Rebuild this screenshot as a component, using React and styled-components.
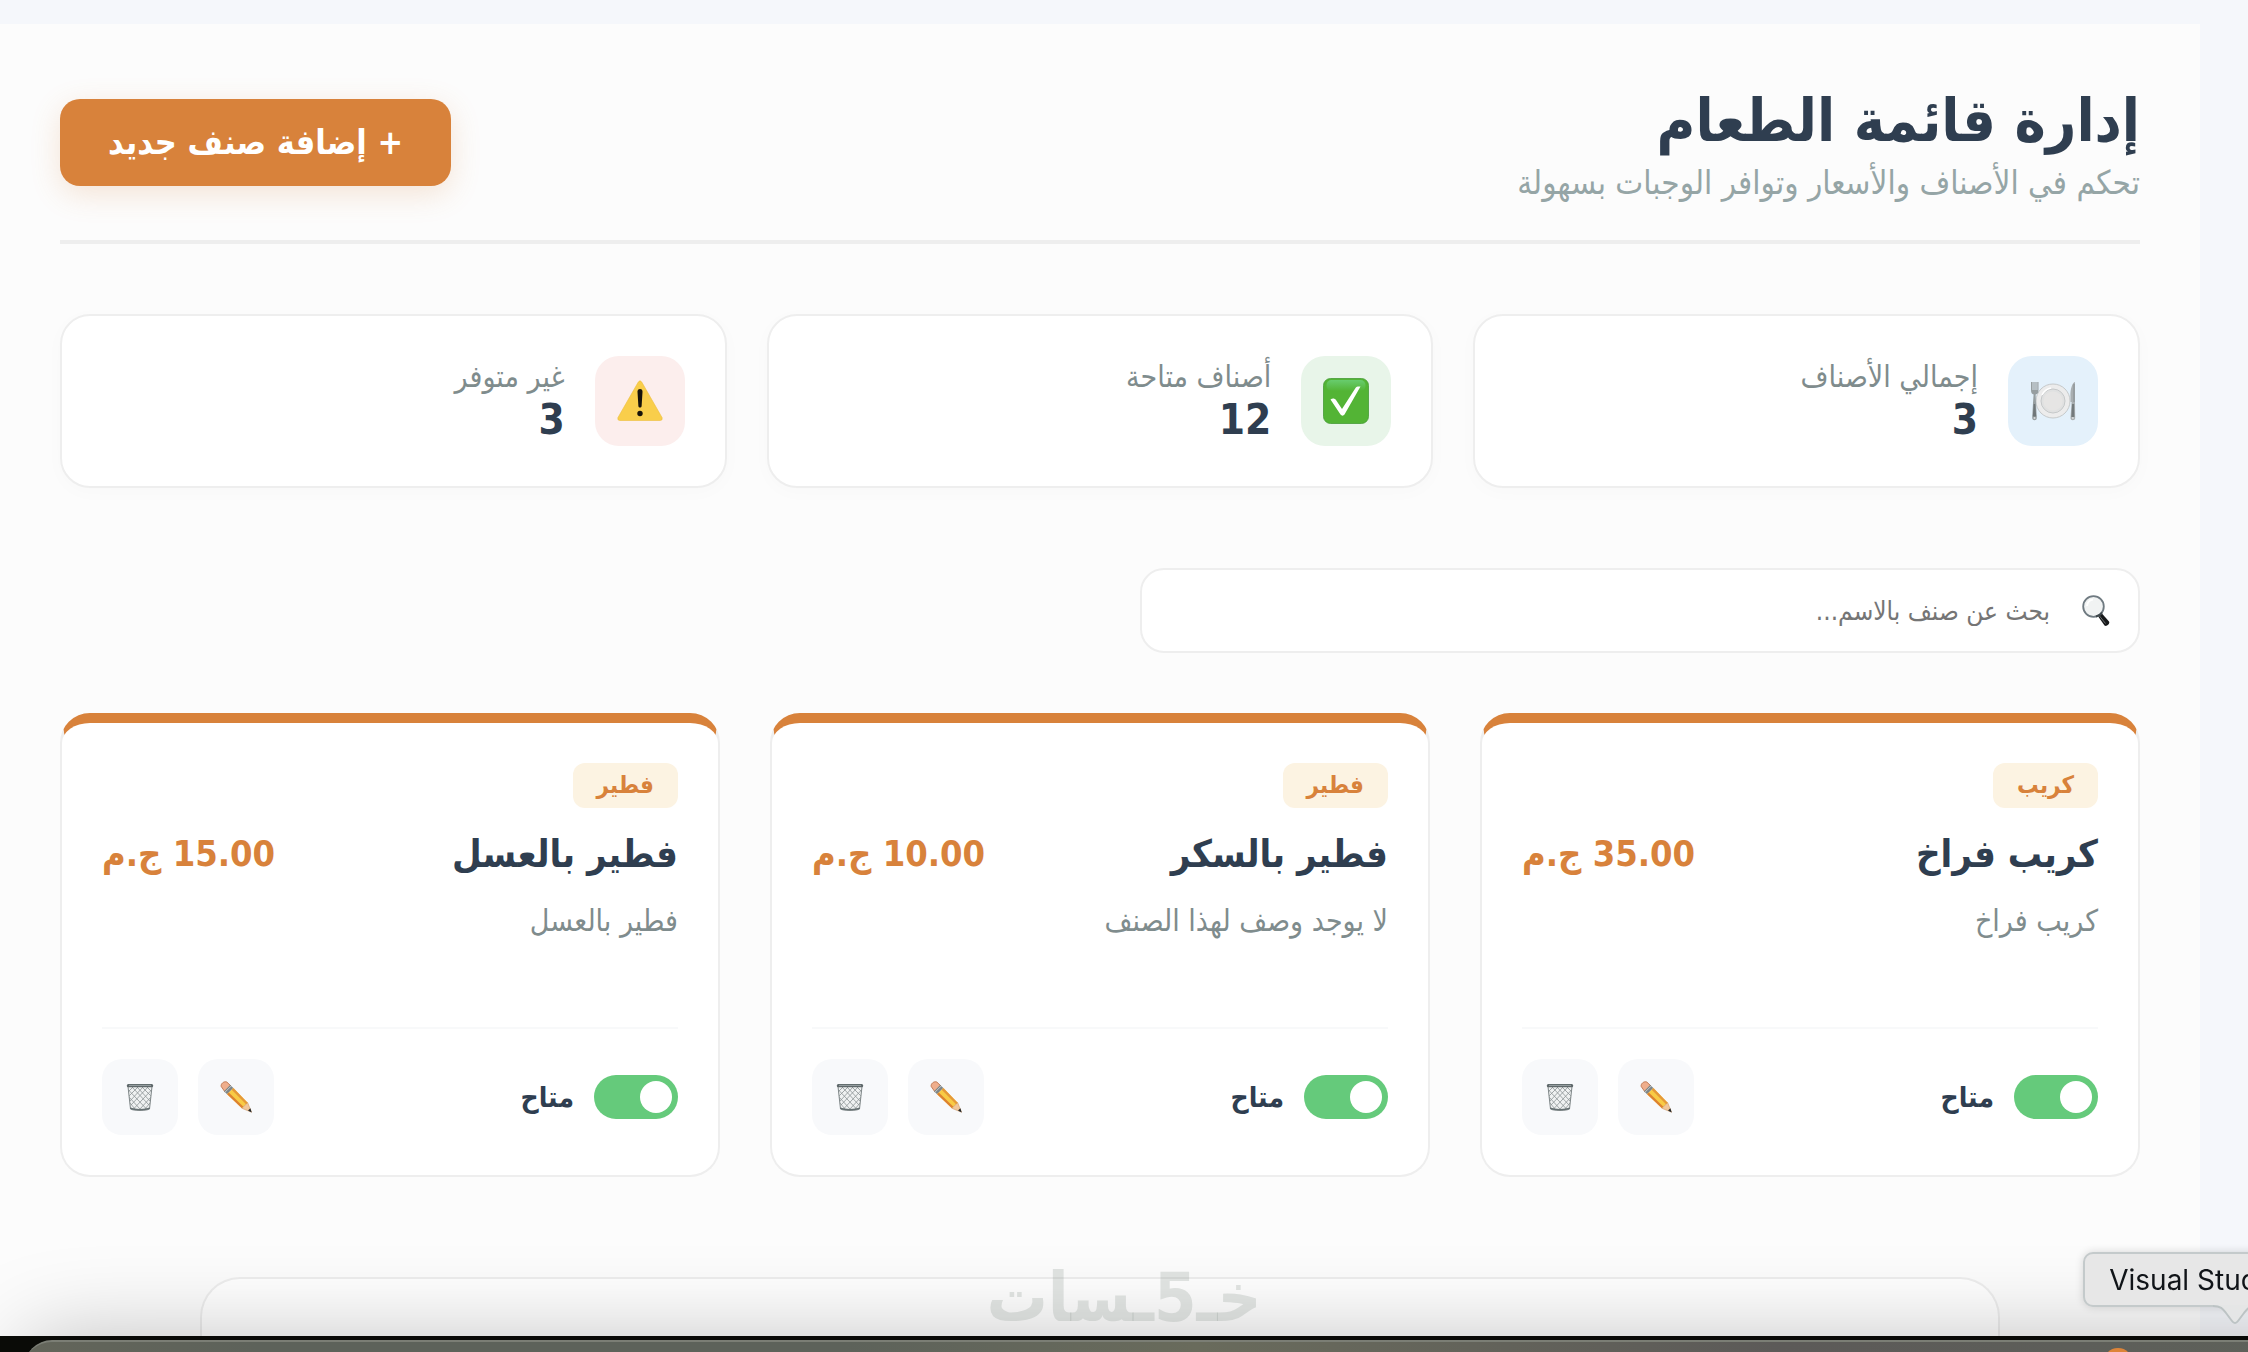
import React, { useState } from 'react';
import styled, { createGlobalStyle } from 'styled-components';

const stats = [
  { id: 'total', label: 'إجمالي الأصناف', value: 3, tint: '#e4f1fb', Icon: PlateIcon },
  { id: 'available', label: 'أصناف متاحة', value: 12, tint: '#e8f5e9', Icon: CheckIcon },
  { id: 'missing', label: 'غير متوفر', value: 3, tint: '#fceeed', Icon: WarningIcon },
];

const initialMeals = [
  { id: 1, category: 'كريب', name: 'كريب فراخ', price: '35.00', description: 'كريب فراخ', available: true },
  { id: 2, category: 'فطير', name: 'فطير بالسكر', price: '10.00', description: '', available: true },
  { id: 3, category: 'فطير', name: 'فطير بالعسل', price: '15.00', description: 'فطير بالعسل', available: true },
];

function PlateIcon() {
  return (
    <svg width="46" height="46" viewBox="0 0 46 46" aria-hidden="true">
      <circle cx="23" cy="23" r="17" fill="#ececec" stroke="#bdbfbf" strokeWidth="0.8" />
      <circle cx="23" cy="23" r="12" fill="#e0e1e1" stroke="#c6c9ca" strokeWidth="1" />
      <circle cx="23" cy="23" r="9.6" fill="#e6e5e4" />
      <path d="M12 17a13 13 0 0 1 9-7" fill="none" stroke="#fff" strokeWidth="1.500" />
      <path d="M1 4v8c0 3 1 4 2.600 4.600L3 25l-.8 15c0 3 4.600 3 4.600 0L6 25l-.4-8.400C7.500 16 8.500 15 8.500 12V4H7.300v8H6.600V4H5.400v8h-.8V4H3.400v8h-.8V4z" fill="#979ea0" />
      <path d="M2.800 38.500L3.700 26h1.500l1 12.500z" fill="#6f7678" />
      <path d="M45 4c-3 1-4.500 7-4.600 13l.2 7h1L40.500 40c0 3 4.700 3 4.700 0L45 24z" fill="#a9afb1" />
      <path d="M44 6v18" stroke="#868d90" strokeWidth="1" />
      <path d="M41.300 39l.8-13h2l.3 13z" fill="#737a7c" />
      <circle cx="4.500" cy="40" r="1" fill="#d6d9da" />
      <circle cx="42.900" cy="40" r="1" fill="#d6d9da" />
    </svg>
  );
}

function CheckIcon() {
  return (
    <svg width="46" height="46" viewBox="0 0 46 46" aria-hidden="true">
      <defs>
        <linearGradient id="checkShine" x1="0" y1="0" x2="0" y2="1">
          <stop offset="0" stopColor="#68cc6e" />
          <stop offset="1" stopColor="#53b435" />
        </linearGradient>
      </defs>
      <rect x="0.500" y="0.500" width="45" height="45" rx="7" fill="#53b435" stroke="#459c36" strokeWidth="0.8" />
      <rect x="3.500" y="2" width="39" height="11" rx="5" fill="url(#checkShine)" />
      <path d="M7.500 21.500c2-1.500 4-1.500 5.500.5l6 9L32.500 10c1-1.500 2.500-1.800 5-1.500L21.500 36.500c-1 1.500-3 1.500-4 0z" fill="#fff" />
    </svg>
  );
}

function WarningIcon() {
  return (
    <svg width="46" height="46" viewBox="0 0 46 46" aria-hidden="true">
      <path d="M21.300 4Q23 1.500 24.700 4L45 39.500Q46 42.500 43 42.500H3Q0 42.500 1 39.500Z" fill="#f9ce4b" stroke="#edbd3b" strokeWidth="0.6" />
      <path d="M20.500 13.500c0-3.300 5-3.300 5 0L24.600 28c-.2 2-3 2-3.200 0z" fill="#16120a" />
      <circle cx="23" cy="35.500" r="2.700" fill="#16120a" />
    </svg>
  );
}

function SearchIcon() {
  return (
    <svg width="28" height="32" viewBox="0 0 28 32" aria-hidden="true">
      <path d="M15.500 20.500l4-2.500 7.500 8.500c1.300 2.500-2.500 5.500-4.500 4z" fill="#17191a" />
      <path d="M17.500 21l6 7.500" stroke="#6b6f70" strokeWidth="1" />
      <circle cx="11.500" cy="11.500" r="10.300" fill="#f1f3f3" stroke="#6f7a81" strokeWidth="1.800" />
      <path d="M20 17.500a10.300 10.300 0 0 1-6 4" fill="none" stroke="#3e474c" strokeWidth="2" />
      <path d="M5 11a7 7 0 0 1 6-6.500" fill="none" stroke="#fff" strokeWidth="2" />
    </svg>
  );
}

function PencilIcon() {
  return (
    <svg width="32" height="32" viewBox="0 0 32 32" aria-hidden="true">
      <path d="M1.200 5.500C.5 3 3.800-.2 6.800 1L11 5l-6 6z" fill="#efae8c" stroke="#b5683f" strokeWidth="0.8" />
      <path d="M4 10.200L10.200 4l3.200 3.100-6.300 6.200z" fill="#7e8688" />
      <path d="M5 11.200L11.200 5" stroke="#c6cbcc" strokeWidth="1" />
      <path d="M7.100 13.300l6.300-6.200 14.300 14.600-5.800 5.600z" fill="#f8cb45" />
      <path d="M7.100 13.300l1.700-1.700 14.600 14.200-1.500 1.500z" fill="#dd8130" />
      <path d="M11.700 8.800l1.700-1.700 14.300 14.600-1.600 1.500z" fill="#e5983a" />
      <path d="M21.900 27.300l5.800-5.600 3.800 9.500z" fill="#f1c79b" stroke="#c78a51" strokeWidth="0.500" />
      <path d="M28 29.400l2.400-2.100 1.300 4.300z" fill="#25292b" />
    </svg>
  );
}

function TrashIcon() {
  return (
    <svg width="28" height="28" viewBox="0 0 28 28" aria-hidden="true">
      <path d="M2 3.500h24L23.500 26c-2 1.800-17 1.800-19 0z" fill="#eff1f1" stroke="#7d8586" strokeWidth="1" />
      <path
        d="M2.500 7l18 19M6 4l17 18M11 4l13 14M16 4l9 9M21 4l4 4M3 14l11 12M4 20l5 6M25.500 7l-18 19M22 4L5 22M17 4L4 18M12 4l-9 9M7 4L3 8M25 14L14 26M24 20l-5 6"
        fill="none"
        stroke="#8b9394"
        strokeWidth="0.8"
      />
      <rect x="0.800" y="1" width="26.400" height="3.200" rx="1.500" fill="#5f686a" />
      <path d="M3 2.400h22" stroke="#a9b0b1" strokeWidth="0.8" />
      <path d="M4.300 25.200c4 2 15.400 2 19.400 0" fill="none" stroke="#667072" strokeWidth="1.500" />
    </svg>
  );
}

const MealCard = ({ meal, onToggle }) => (
  <Card>
    <Category>{meal.category}</Category>
    <CardHeading>
      <MealName>{meal.name}</MealName>
      <Price>{meal.price} ج.م</Price>
    </CardHeading>
    <Description>{meal.description || 'لا يوجد وصف لهذا الصنف'}</Description>
    <CardFooter>
      <Availability>
        <Switch type="checkbox" checked={meal.available} onChange={() => onToggle(meal.id)} />
        {meal.available ? 'متاح' : 'غير متاح'}
      </Availability>
      <Actions>
        <IconButton type="button" aria-label="تعديل"><PencilIcon /></IconButton>
        <IconButton type="button" aria-label="حذف"><TrashIcon /></IconButton>
      </Actions>
    </CardFooter>
  </Card>
);

const App = () => {
  const [meals, setMeals] = useState(initialMeals);
  const [search, setSearch] = useState('');

  const toggleMeal = (id) => {
    setMeals(meals.map((meal) => (meal.id === id ? { ...meal, available: !meal.available } : meal)));
  };

  const visibleMeals = meals.filter((meal) => meal.name.includes(search));

  return (
    <>
      <GlobalStyle />
      <Screen dir="rtl">
        <Page>
          <Header>
            <div>
              <Title>إدارة قائمة الطعام</Title>
              <Subtitle>تحكم في الأصناف والأسعار وتوافر الوجبات بسهولة</Subtitle>
            </div>
            <AddButton type="button">+ إضافة صنف جديد</AddButton>
          </Header>

          <StatsGrid>
            {stats.map(({ id, label, value, tint, Icon }) => (
              <StatCard key={id}>
                <StatIcon $tint={tint}><Icon /></StatIcon>
                <div>
                  <StatLabel>{label}</StatLabel>
                  <StatValue>{value}</StatValue>
                </div>
              </StatCard>
            ))}
          </StatsGrid>

          <SearchBox>
            <SearchIcon />
            <SearchInput
              type="text"
              aria-label="بحث عن صنف"
              placeholder="بحث عن صنف بالاسم..."
              value={search}
              onChange={(event) => setSearch(event.target.value)}
            />
          </SearchBox>

          <MealsGrid>
            {visibleMeals.map((meal) => (
              <MealCard key={meal.id} meal={meal} onToggle={toggleMeal} />
            ))}
          </MealsGrid>

          <BottomPanel />
        </Page>
      </Screen>

      <Desktop>
        <Dock />
        <DockApp />
      </Desktop>
      <Watermark dir="rtl">خـ5ـسات</Watermark>
      <Tooltip>
        Visual Studio Code
        <TooltipArrow width="44" height="20" viewBox="0 0 44 20" aria-hidden="true">
          <path d="M0 0H44V1C36 1 34 4 31 8L25 16Q22 20 19 16L13 8C10 4 8 1 0 1Z" fill="#e5e6e6" />
          <path d="M0 1C8 1 10 4 13 8L19 16Q22 20 25 16L31 8C34 4 36 1 44 1" fill="none" stroke="#bcc3c4" strokeWidth="2" />
        </TooltipArrow>
      </Tooltip>
    </>
  );
};

export default App;

const GlobalStyle = createGlobalStyle`
  * {
    box-sizing: border-box;
  }

  body {
    margin: 0;
    background-color: #f5f7fb;
    font-family: 'DejaVu Sans Condensed', 'DejaVu Sans', sans-serif;
    font-stretch: condensed;
    color: #2f3e50;
  }

  h1, h2, p {
    margin: 0;
  }

  button, input {
    font-family: inherit;
    font-stretch: inherit;
  }
`;

const Screen = styled.div`
  height: 100vh;
  overflow: hidden;
  padding: 24px 48px 0 0;
`;

const Page = styled.main`
  display: flex;
  flex-direction: column;
  min-height: 100%;
  padding: 56px 60px 0;
  background-color: #fcfcfc;
`;

const Header = styled.header`
  display: flex;
  justify-content: space-between;
  align-items: center;
  padding-bottom: 36px;
  margin-bottom: 70px;
  border-bottom: 4px solid #eeeeee;
`;

const Title = styled.h1`
  font-size: 59px;
  font-weight: bold;
  line-height: 82px;
`;

const Subtitle = styled.p`
  font-size: 33px;
  line-height: 42px;
  color: #95a5a6;
`;

const AddButton = styled.button`
  height: 87px;
  padding: 0 48px;
  border: none;
  border-radius: 20px;
  background-color: #d8823b;
  color: white;
  font-size: 34px;
  font-weight: bold;
  cursor: pointer;
  box-shadow: 0 8px 30px rgba(216, 130, 59, 0.2);
`;

const StatsGrid = styled.section`
  display: grid;
  grid-template-columns: repeat(3, 1fr);
  gap: 40px;
  margin-bottom: 80px;
`;

const StatCard = styled.div`
  display: flex;
  align-items: center;
  gap: 30px;
  padding: 40px;
  border: 2px solid #eeeeee;
  border-radius: 30px;
  background-color: white;
  box-shadow: 0 4px 20px rgba(0, 0, 0, 0.02);
`;

const StatIcon = styled.div`
  display: flex;
  align-items: center;
  justify-content: center;
  width: 90px;
  height: 90px;
  border-radius: 24px;
  background-color: ${p => p.$tint};
`;

const StatLabel = styled.p`
  font-size: 30px;
  line-height: 38px;
  color: #7f8c8d;
`;

const StatValue = styled.p`
  font-size: 42px;
  font-weight: bold;
  line-height: 48px;
`;

const SearchBox = styled.label`
  display: flex;
  align-items: center;
  gap: 32px;
  width: 100%;
  max-width: 1000px;
  height: 85px;
  margin-bottom: 60px;
  padding: 0 28px;
  border: 2px solid #eeeeee;
  border-radius: 24px;
  background-color: white;
`;

const SearchInput = styled.input`
  flex: 1;
  min-width: 0;
  padding: 0;
  border: none;
  outline: none;
  background: none;
  font-size: 26px;
  color: #2f3e50;

  &::placeholder {
    color: #757575;
  }
`;

const MealsGrid = styled.section`
  display: grid;
  grid-template-columns: repeat(3, 1fr);
  gap: 50px;
  margin-bottom: 100px;
`;

const Card = styled.article`
  display: flex;
  flex-direction: column;
  align-items: stretch;
  padding: 40px;
  border: 2px solid #eeeeee;
  border-top: 10px solid #d8823b;
  border-radius: 30px;
  background-color: white;
`;

const Category = styled.span`
  align-self: flex-start;
  padding: 0 24px;
  border-radius: 12px;
  background-color: #fcf3e2;
  color: #d8823b;
  font-size: 24px;
  font-weight: bold;
  line-height: 45px;
`;

const CardHeading = styled.div`
  display: flex;
  justify-content: space-between;
  align-items: center;
  margin-top: 22px;
`;

const MealName = styled.h2`
  font-size: 38px;
  font-weight: bold;
  line-height: 48px;
`;

const Price = styled.span`
  font-size: 36px;
  font-weight: bold;
  line-height: 48px;
  color: #d8823b;
`;

const Description = styled.p`
  min-height: 127px;
  margin-top: 22px;
  font-size: 30px;
  line-height: 42px;
  color: #7f8c8d;
`;

const CardFooter = styled.div`
  display: flex;
  justify-content: space-between;
  align-items: center;
  padding-top: 30px;
  border-top: 2px solid #f8f9fa;
`;

const Availability = styled.label`
  display: flex;
  align-items: center;
  gap: 20px;
  font-size: 28px;
  font-weight: bold;
  cursor: pointer;
`;

const Switch = styled.input`
  appearance: none;
  display: flex;
  align-items: center;
  justify-content: flex-end;
  width: 84px;
  height: 44px;
  margin: 0;
  padding: 6px;
  border-radius: 22px;
  background-color: #cccccc;
  cursor: pointer;

  &::before {
    content: '';
    width: 32px;
    height: 32px;
    border-radius: 50%;
    background-color: white;
  }

  &:checked {
    justify-content: flex-start;
    background-color: #65ca7b;
  }
`;

const Actions = styled.div`
  display: flex;
  gap: 20px;
`;

const IconButton = styled.button`
  display: flex;
  align-items: center;
  justify-content: center;
  width: 76px;
  height: 76px;
  padding: 0;
  border: none;
  border-radius: 20px;
  background-color: #f8f9fb;
  cursor: pointer;
`;

const BottomPanel = styled.section`
  flex: 1;
  width: 100%;
  max-width: 1800px;
  min-height: 120px;
  margin: 0 auto;
  border: 2px solid #eeeeee;
  border-bottom: none;
  border-radius: 40px 40px 0 0;
  background-color: white;
`;

const Desktop = styled.div`
  position: fixed;
  bottom: 0;
  left: 0;
  right: 0;
  height: 16px;
  background-color: #0b0c08;
`;

const Dock = styled.div`
  position: absolute;
  top: 4px;
  left: 24px;
  right: -120px;
  height: 120px;
  border-top: 2px solid #7b7e75;
  border-radius: 28px;
  background: linear-gradient(90deg, #63655a, #5d625a 10%, #5d625a 35%, #696b5c 50%, #5c5a58 75%, #5e625a);
  box-shadow: 0 0 90px rgba(0, 0, 0, 0.26);
`;

const DockApp = styled.div`
  position: absolute;
  top: 12px;
  right: 115px;
  width: 30px;
  height: 30px;
  border-radius: 50%;
  background-color: #dd8439;
`;

const Watermark = styled.div`
  position: fixed;
  bottom: 14px;
  left: 0;
  right: 0;
  text-align: center;
  font-size: 68px;
  font-weight: bold;
  line-height: 80px;
  color: rgba(140, 150, 145, 0.25);
  pointer-events: none;
`;

const Tooltip = styled.div`
  position: fixed;
  right: -138px;
  bottom: 45px;
  height: 55px;
  padding: 0 24px;
  border: 2px solid #c4cacb;
  border-radius: 10px;
  background-color: #e7e7e7;
  box-shadow: 0 0 8px rgba(0, 0, 0, 0.15);
  color: #101418;
  font-family: Inter, sans-serif;
  font-size: 28px;
  line-height: 52px;
  white-space: nowrap;
`;

const TooltipArrow = styled.svg`
  position: absolute;
  top: 100%;
  left: 50%;
  margin-left: -22px;
`;
